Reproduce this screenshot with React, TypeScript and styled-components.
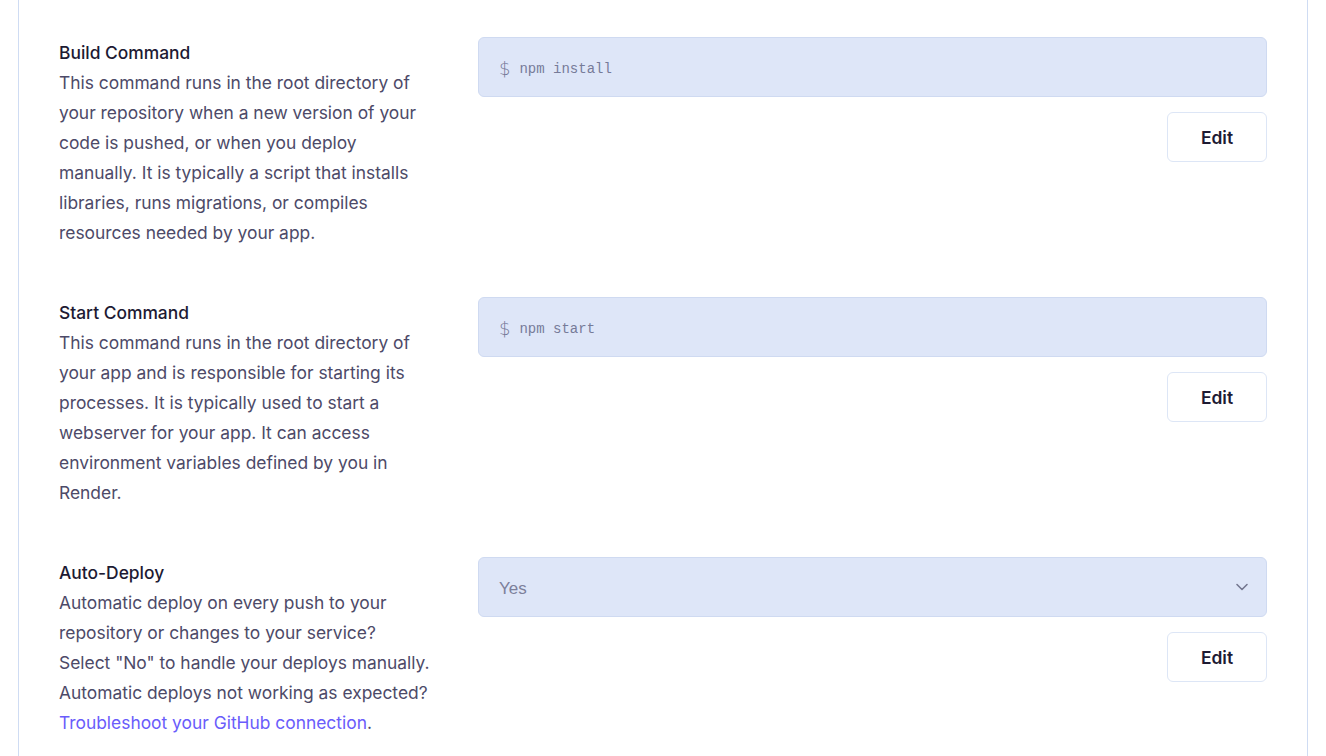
import React from "react";
import styled, { createGlobalStyle } from "styled-components";

const Global = createGlobalStyle`
  html, body { margin: 0; padding: 0; background: #ffffff; }
  body { font-family: Inter, "Noto Sans", sans-serif; -webkit-font-smoothing: antialiased; min-height: 756px; }
  * { box-sizing: border-box; }
`;

const Page = styled.div`
  padding: 0 18px;
  height: 756px;
  overflow: hidden;
`;

const Card = styled.section`
  border-left: 1px solid #cfdcf3;
  border-right: 1px solid #cfdcf3;
  min-height: 756px;
  padding: 37px 40px 0 40px;
  display: flex;
  flex-direction: column;
  gap: 49px;
`;

const Row = styled.div`
  display: grid;
  grid-template-columns: 371px 1fr;
  gap: 48px;
  align-items: start;
`;

const Info = styled.div`
  font-size: 17.4px;
  line-height: 30px;
  color: #4d4a68;
  padding-top: 1px;
`;

const Title = styled.div`
  font-weight: 540;
  color: #1d1a33;
`;

const Desc = styled.p`
  margin: 0;
`;

const Link = styled.a`
  color: #6a5cfb;
  text-decoration: none;
`;

const Control = styled.div`
  display: flex;
  flex-direction: column;
  align-items: flex-end;
  gap: 15px;
`;

const Field = styled.div`
  width: 100%;
  height: 60px;
  background: #dee6f8;
  border: 1px solid #cfdaf1;
  border-radius: 6px;
  display: flex;
  align-items: center;
  justify-content: space-between;
  padding: 0 17px 0 20px;
`;

const Code = styled.span`
  font-family: "Liberation Mono", "DejaVu Sans Mono", monospace;
  font-size: 14px;
  color: #767b98;
  display: flex;
  align-items: center;
  padding-top: 3px;
`;

const Dollar = styled.span`
  font-family: "DejaVu Sans", sans-serif;
  font-size: 18px;
  font-weight: 300;
  margin-right: 9px;
`;

const SelectText = styled.span`
  font-family: "Liberation Sans", Arial, sans-serif;
  font-size: 17px;
  color: #7c809b;
  padding-top: 4px;
`;

const EditButton = styled.button`
  width: 100px;
  height: 50px;
  background: #ffffff;
  border: 1px solid #dde6f6;
  border-radius: 6px;
  font-family: Inter, "Noto Sans", sans-serif;
  font-size: 17.4px;
  font-weight: 560;
  color: #1d1a33;
  cursor: pointer;
`;

const Chevron = () => (
  <svg width="14" height="14" viewBox="0 0 14 14" fill="none">
    <path d="M2 4.5 L7 9.5 L12 4.5" stroke="#747890" strokeWidth="1.6" strokeLinecap="round" strokeLinejoin="round" />
  </svg>
);

export default function App() {
  return (
    <>
      <Global />
      <Page>
        <Card>
          <Row>
            <Info>
              <Title>Build Command</Title>
              <Desc>
                This command runs in the root directory of your repository when a new version of your code is pushed, or when you deploy manually. It is typically a script that installs libraries, runs migrations, or compiles resources needed by your app.
              </Desc>
            </Info>
            <Control>
              <Field>
                <Code><Dollar>$</Dollar>npm install</Code>
              </Field>
              <EditButton>Edit</EditButton>
            </Control>
          </Row>
          <Row>
            <Info>
              <Title>Start Command</Title>
              <Desc>
                This command runs in the root directory of your app and is responsible for starting its processes. It is typically used to start a webserver for your app. It can access environment variables defined by you in Render.
              </Desc>
            </Info>
            <Control>
              <Field>
                <Code><Dollar>$</Dollar>npm start</Code>
              </Field>
              <EditButton>Edit</EditButton>
            </Control>
          </Row>
          <Row>
            <Info>
              <Title>Auto-Deploy</Title>
              <Desc>
                Automatic deploy on every push to your repository or changes to your service? Select "No" to handle your deploys manually. Automatic deploys not working as expected?{" "}
                <Link href="#">Troubleshoot your GitHub connection</Link>.
              </Desc>
            </Info>
            <Control>
              <Field>
                <SelectText>Yes</SelectText>
                <Chevron />
              </Field>
              <EditButton>Edit</EditButton>
            </Control>
          </Row>
        </Card>
      </Page>
    </>
  );
}
